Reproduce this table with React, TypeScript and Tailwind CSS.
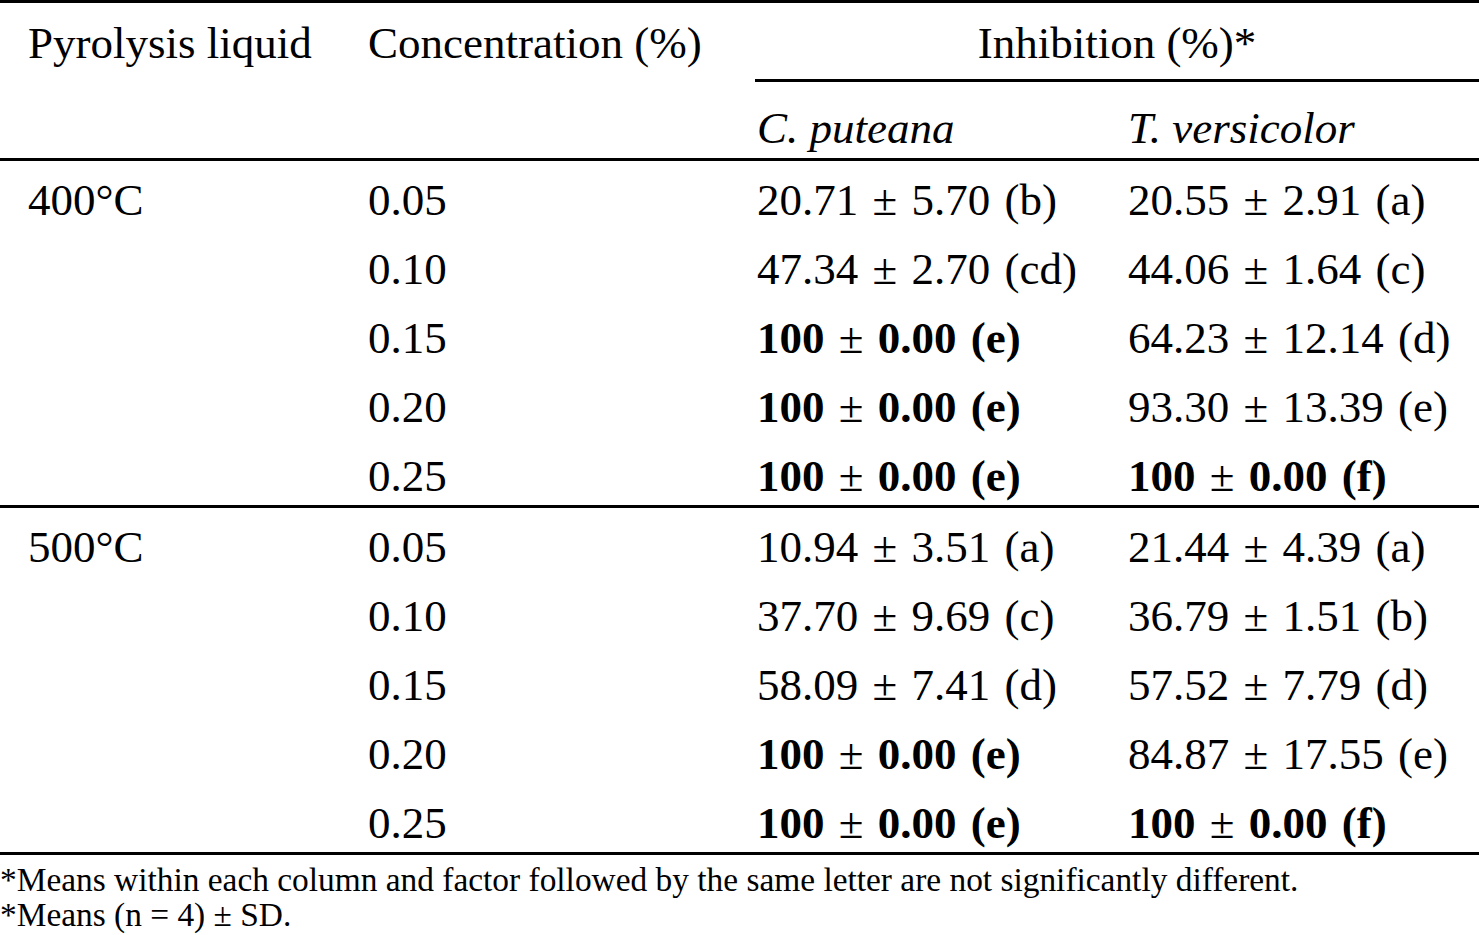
import React from "react";

type Cell = { text: string; bold?: boolean };

const B = ({ v }: { v: string }) => {
  // bold value with regular-weight ± sign
  const [a, b] = v.split("±");
  return (
    <span>
      <span className="font-bold">{a}</span>
      <span>±</span>
      <span className="font-bold">{b}</span>
    </span>
  );
};

const groups: { label: string; rows: [string, Cell, Cell][] }[] = [
  {
    label: "400°C",
    rows: [
      ["0.05", { text: "20.71 ± 5.70 (b)" }, { text: "20.55 ± 2.91 (a)" }],
      ["0.10", { text: "47.34 ± 2.70 (cd)" }, { text: "44.06 ± 1.64 (c)" }],
      ["0.15", { text: "100 ± 0.00 (e)", bold: true }, { text: "64.23 ± 12.14 (d)" }],
      ["0.20", { text: "100 ± 0.00 (e)", bold: true }, { text: "93.30 ± 13.39 (e)" }],
      ["0.25", { text: "100 ± 0.00 (e)", bold: true }, { text: "100 ± 0.00 (f)", bold: true }],
    ],
  },
  {
    label: "500°C",
    rows: [
      ["0.05", { text: "10.94 ± 3.51 (a)" }, { text: "21.44 ± 4.39 (a)" }],
      ["0.10", { text: "37.70 ± 9.69 (c)" }, { text: "36.79 ± 1.51 (b)" }],
      ["0.15", { text: "58.09 ± 7.41 (d)" }, { text: "57.52 ± 7.79 (d)" }],
      ["0.20", { text: "100 ± 0.00 (e)", bold: true }, { text: "84.87 ± 17.55 (e)" }],
      ["0.25", { text: "100 ± 0.00 (e)", bold: true }, { text: "100 ± 0.00 (f)", bold: true }],
    ],
  },
];

const Val = ({ c }: { c: Cell }) => (c.bold ? <B v={c.text} /> : <span>{c.text}</span>);

export default function App() {
  return (
    <div className="w-[1479px] h-[935px] bg-white text-black font-['Liberation_Serif','Times_New_Roman',serif] overflow-hidden">
      <div className="h-[3px] bg-black" />
      {/* header */}
      <div className="grid grid-cols-[368px_387px_373px_351px] text-[45px] whitespace-nowrap">
        <div className="h-[79px] pl-[28px] pt-[4px] leading-[72px]">Pyrolysis liquid</div>
        <div className="h-[79px] pt-[4px] leading-[72px]">Concentration (%)</div>
        <div className="col-span-2 h-[79px] border-b-[3px] border-black pt-[4px] leading-[72px] text-center">
          Inhibition (%)*
        </div>
        <div className="h-[76px]" />
        <div className="h-[76px]" />
        <div className="h-[76px] pl-[2px] pt-[16px] leading-[60px] italic">C. puteana</div>
        <div className="h-[76px] pt-[16px] leading-[60px] italic">T. versicolor</div>
      </div>
      {groups.map((g) => (
        <div key={g.label}>
          <div className="h-[3px] bg-black" />
          <div className="h-[344px] pt-[5px] grid grid-cols-[368px_387px_373px_351px] grid-rows-[69px_69px_69px_69px_63px] text-[45px] leading-[69px] whitespace-nowrap">
            {g.rows.map((r, i) => (
              <React.Fragment key={r[0]}>
                <div className="pl-[28px]">{i === 0 ? g.label : ""}</div>
                <div>{r[0]}</div>
                <div className="pl-[2px] [word-spacing:3px]">
                  <Val c={r[1]} />
                </div>
                <div className="[word-spacing:3px]">
                  <Val c={r[2]} />
                </div>
              </React.Fragment>
            ))}
          </div>
        </div>
      ))}
      <div className="h-[3px] bg-black" />
      <div className="pt-[7px] text-[33.4px] leading-[35px] whitespace-nowrap">
        <div>*Means within each column and factor followed by the same letter are not significantly different.</div>
        <div>*Means (n = 4) ± SD.</div>
      </div>
    </div>
  );
}
